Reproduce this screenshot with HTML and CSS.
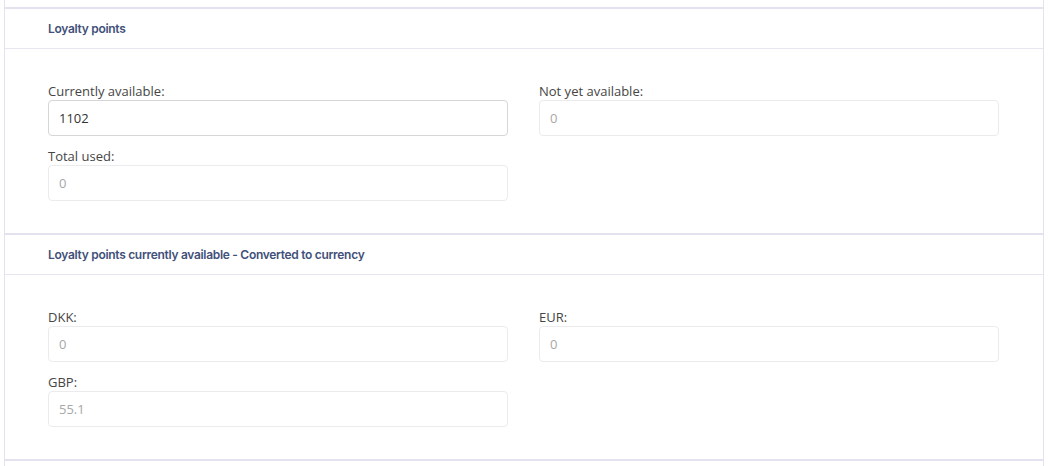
FILE: index.html
```html
<!DOCTYPE html>
<html lang="en">
<head>
<meta charset="utf-8">
<title>Loyalty points</title>
<link rel="stylesheet" href="styles.css">
</head>
<body>
<div class="panel">
  <section class="section">
    <div class="section-header">Loyalty points</div>
    <div class="section-body">
      <div class="field">
        <label class="field-label">Currently available:</label>
        <div class="input input-active">1102</div>
      </div>
      <div class="field">
        <label class="field-label">Not yet available:</label>
        <div class="input input-disabled">0</div>
      </div>
      <div class="field">
        <label class="field-label">Total used:</label>
        <div class="input input-disabled">0</div>
      </div>
    </div>
  </section>
  <section class="section">
    <div class="section-header">Loyalty points currently available - Converted to currency</div>
    <div class="section-body">
      <div class="field">
        <label class="field-label">DKK:</label>
        <div class="input input-disabled">0</div>
      </div>
      <div class="field">
        <label class="field-label">EUR:</label>
        <div class="input input-disabled">0</div>
      </div>
      <div class="field">
        <label class="field-label">GBP:</label>
        <div class="input input-disabled">55.1</div>
      </div>
    </div>
  </section>
  <div class="section-end"></div>
</div>
</body>
</html>
```

FILE: styles.css
```css
html, body {
  margin: 0;
  padding: 0;
  background: #ffffff;
}

body {
  font-family: "Open Sans", "Liberation Sans", sans-serif;
  color: #444444;
  height: 466px;
  overflow: hidden;
}

.panel {
  margin-left: 4px;
  width: 1038px;
  border-left: 1px solid #e3e2ee;
  border-right: 1px solid #e3e2ee;
  padding-top: 7px;
  min-height: 459px;
}

.section {
  border-top: 2px solid #e3e2ee;
}

.section-header {
  height: 39px;
  border-bottom: 1px solid #e6e5f0;
  padding-left: 43px;
  display: flex;
  align-items: center;
  font-family: "Inter", "Liberation Sans", sans-serif;
  font-weight: 600;
  font-size: 12px;
  letter-spacing: -0.3px;
  color: #42507a;
}

.section-body {
  display: grid;
  grid-template-columns: 460px 460px;
  column-gap: 31px;
  row-gap: 11px;
  padding: 33px 43px 32px 43px;
}

.field-label {
  display: block;
  height: 18px;
  line-height: 18px;
  font-size: 13px;
  color: #454545;
}

.input {
  box-sizing: border-box;
  height: 36px;
  border-radius: 4px;
  padding: 0 10px;
  display: flex;
  align-items: center;
  font-size: 13px;
}

.input-active {
  border: 1px solid #d6d6d9;
  color: #333333;
}

.input-disabled {
  border: 1px solid #ebebee;
  color: #a8a8a8;
}

.section-end {
  border-top: 2px solid #e3e2ee;
}
```
